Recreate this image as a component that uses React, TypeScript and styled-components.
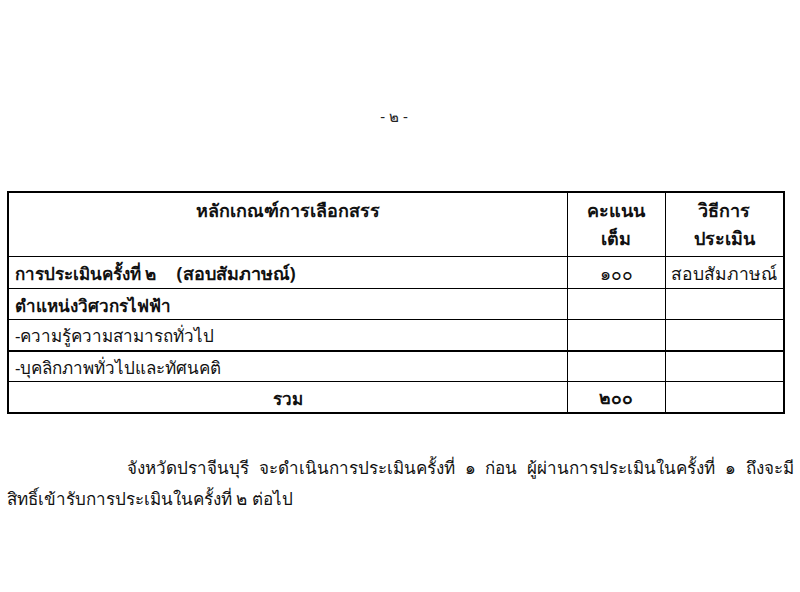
import styled, { createGlobalStyle } from 'styled-components';

const GlobalStyle = createGlobalStyle`
    html, body {
        margin: 0;
        padding: 0;
        background: #ffffff;
    }
    body {
        font-family: "Noto Sans", "DejaVu Sans", sans-serif;
        color: #111;
    }
`;

type Row = {
    label: string;
    note?: string;
    bold?: boolean;
    center?: boolean;
    score?: string;
    scoreBold?: boolean;
    method?: string;
    thick?: boolean;
};

const rows: Row[] = [
    {
        label: 'การประเมินครั้งที่ ๒',
        note: '(สอบสัมภาษณ์)',
        bold: true,
        score: '๑๐๐',
        method: 'สอบสัมภาษณ์',
    },
    { label: 'ตำแหน่งวิศวกรไฟฟ้า', bold: true },
    { label: '-ความรู้ความสามารถทั่วไป', thick: true },
    { label: '-บุคลิกภาพทั่วไปและทัศนคติ' },
    { label: 'รวม', bold: true, center: true, score: '๒๐๐', scoreBold: true },
];

export default function App() {
    return (
        <>
            <GlobalStyle />
            <Page>
                <PageNo>- ๒ -</PageNo>
                <Table>
                    <colgroup>
                        <col style={{ width: 559 }} />
                        <col style={{ width: 98 }} />
                        <col style={{ width: 119 }} />
                    </colgroup>
                    <thead>
                        <tr>
                            <HeadCell>หลักเกณฑ์การเลือกสรร</HeadCell>
                            <HeadCell>
                                คะแนน
                                <br />
                                เต็ม
                            </HeadCell>
                            <HeadCell>
                                วิธีการ
                                <br />
                                ประเมิน
                            </HeadCell>
                        </tr>
                    </thead>
                    <tbody>
                        {rows.map((r) => (
                            <BodyRow key={r.label} $thick={r.thick}>
                                <LabelCell $bold={r.bold} $center={r.center}>
                                    {r.label}
                                    {r.note && <Note>{r.note}</Note>}
                                </LabelCell>
                                <ValueCell $bold={r.scoreBold}>{r.score}</ValueCell>
                                <ValueCell>{r.method}</ValueCell>
                            </BodyRow>
                        ))}
                    </tbody>
                </Table>
                <Paragraph>
                    จังหวัดปราจีนบุรี จะดำเนินการประเมินครั้งที่ ๑ ก่อน ผู้ผ่านการประเมินในครั้งที่ ๑ ถึงจะมี
                    สิทธิ์เข้ารับการประเมินในครั้งที่ ๒ ต่อไป
                </Paragraph>
            </Page>
        </>
    );
}

const Page = styled.main`
    width: 800px;
    height: 592px;
    box-sizing: border-box;
    padding: 106px 12px 0 7px;
    overflow: hidden;
    display: flex;
    flex-direction: column;
`;

const PageNo = styled.div`
    text-align: center;
    font-size: 15px;
    line-height: 20px;
    padding-right: 7px;
    color: #222;
`;

const Table = styled.table`
    margin-top: 65px;
    width: 777px;
    border-collapse: collapse;
    table-layout: fixed;
    border: 2px solid #000;
`;

const HeadCell = styled.th`
    height: 60px;
    border: 1.5px solid #000;
    font-size: 18px;
    line-height: 28px;
    font-weight: 700;
    vertical-align: top;
    padding: 3px 4px 0;
    text-align: center;
`;

const BodyRow = styled.tr<{ $thick?: boolean }>`
    height: 31px;
    td {
        border-bottom: ${(p) => (p.$thick ? '2px' : '1.5px')} solid #000;
    }
`;

const LabelCell = styled.td<{ $bold?: boolean; $center?: boolean }>`
    border: 1.5px solid #000;
    padding: 2px 6px 0 6px;
    font-size: 17px;
    font-weight: ${(p) => (p.$bold ? 700 : 400)};
    text-align: ${(p) => (p.$center ? 'center' : 'left')};
    white-space: nowrap;
`;

const Note = styled.span`
    margin-left: 20px;
    font-size: 18px;
`;

const ValueCell = styled.td<{ $bold?: boolean }>`
    border: 1.5px solid #000;
    padding: 2px 2px 0;
    font-size: 17.5px;
    font-weight: ${(p) => (p.$bold ? 700 : 400)};
    text-align: center;
    white-space: nowrap;
`;

const Paragraph = styled.p`
    margin: 38px -6px 0 0;
    font-size: 17px;
    line-height: 31px;
    text-indent: 120px;
    text-align: justify;
`;
